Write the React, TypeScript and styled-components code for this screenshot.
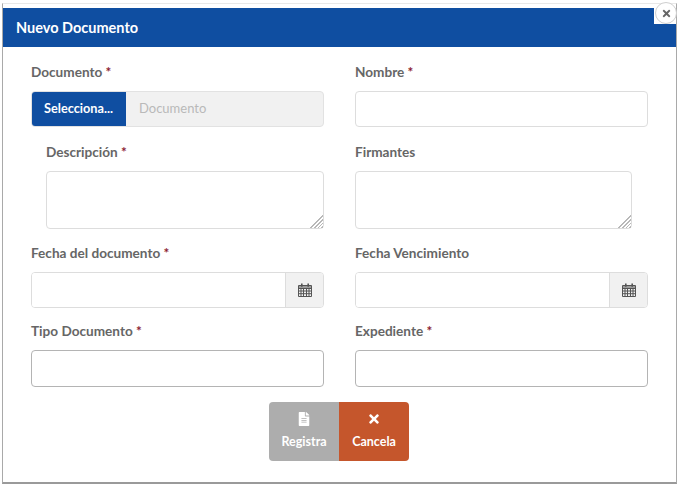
import React from 'react';
import styled, { createGlobalStyle } from 'styled-components';
import { FaFileAlt, FaTimes } from 'react-icons/fa';

const GlobalStyle = createGlobalStyle`
  html, body {
    margin: 0;
    padding: 0;
    background: #fff;
    font-family: Lato, "Open Sans", "Liberation Sans", sans-serif;
  }
`;

const Modal = styled.div`
  position: relative;
  box-sizing: border-box;
  width: 675px;
  height: 481px;
  margin: 3px 0 0 2px;
  padding-top: 4px;
  border: 1px solid #a9a9a9;
  border-top-color: #e8e8e8;
  border-bottom: 2px solid #9a9a9a;
`;

const Header = styled.header`
  display: flex;
  align-items: center;
  box-sizing: border-box;
  height: 39px;
  padding: 0 0 1px 13px;
  background: #0f4ea1;
  color: #fff;
  font-size: 14.5px;
  font-weight: 700;
`;

const CloseCorner = styled.div`
  position: absolute;
  top: 4px;
  right: 0;
  display: flex;
  align-items: flex-end;
  justify-content: flex-end;
  width: 22px;
  height: 16px;
  background: #fff;
`;

const CloseButton = styled.button`
  display: flex;
  flex-shrink: 0;
  align-items: center;
  justify-content: center;
  box-sizing: border-box;
  width: 22px;
  height: 22px;
  margin-right: -1px;
  padding: 0;
  border: 1px solid #cfcfcf;
  border-radius: 50%;
  background: #fff;
  color: #666;
  font-size: 11px;
`;

const Form = styled.form`
  display: grid;
  grid-template-columns: 293px 293px;
  column-gap: 31px;
  padding: 17px 0 0 28px;
`;

const Field = styled.div<{ $indentLeft?: boolean; $indentRight?: boolean; $height: number }>`
  display: flex;
  flex-direction: column;
  height: ${(p) => p.$height}px;
  padding-left: ${(p) => (p.$indentLeft ? 15 : 0)}px;
  padding-right: ${(p) => (p.$indentRight ? 16 : 0)}px;
`;

const Label = styled.label`
  display: block;
  height: 27px;
  color: #666666;
  font-size: 13.6px;
  font-weight: 700;
  line-height: 17px;
`;

const Required = styled.span`
  color: #8c1c33;
`;

const TextInput = styled.input<{ $dark?: boolean; $tall?: boolean }>`
  display: block;
  box-sizing: border-box;
  width: 100%;
  height: ${(p) => (p.$tall ? 37 : 36)}px;
  padding: 0 10px;
  border: 1px solid ${(p) => (p.$dark ? '#b4b4b4' : '#dddddd')};
  border-radius: 4px;
  background: #fff;
`;

const TextArea = styled.textarea`
  display: block;
  box-sizing: border-box;
  width: 100%;
  height: 58px;
  padding: 6px 10px;
  border: 1px solid #dddddd;
  border-radius: 4px;
  background: #fff;
  resize: vertical;
  &::-webkit-resizer {
    background:
      linear-gradient(135deg, #fff 52%, transparent 52%),
      repeating-linear-gradient(135deg, #fff 0 1.5px, #b8b8b8 1.5px 2.6px);
  }
`;

const FileGroup = styled.div`
  display: flex;
  height: 36px;
  border: 1px solid #e2e2e2;
  border-radius: 4px;
  box-sizing: border-box;
  background: #f1f1f1;
  overflow: hidden;
`;

const FileButton = styled.div`
  display: flex;
  align-items: center;
  justify-content: center;
  width: 95px;
  margin: -1px 0 -1px -1px;
  padding-bottom: 3px;
  background: #0f4ea1;
  color: #fff;
  font-size: 12.7px;
  font-weight: 700;
`;

const FilePlaceholder = styled.div`
  display: flex;
  align-items: center;
  padding: 0 0 3px 13px;
  color: #b9b9b9;
  font-size: 13px;
  font-weight: 400;
`;

const DateGroup = styled.div`
  display: flex;
  box-sizing: border-box;
  height: 36px;
  border: 1px solid #dddddd;
  border-radius: 4px;
  overflow: hidden;
`;

const DateInput = styled.input`
  flex: 1;
  min-width: 0;
  border: 0;
  background: #fff;
`;

const DateAddon = styled.span`
  display: flex;
  align-items: center;
  justify-content: center;
  width: 37px;
  border-left: 1px solid #dddddd;
  background: #f1f1f1;
  color: #555;
`;

const Actions = styled.div`
  display: flex;
  justify-content: center;
  margin: 15px 0 0 -1px;
`;

const ActionButton = styled.button<{ $bg: string; $side: 'left' | 'right' }>`
  display: flex;
  flex-direction: column;
  align-items: center;
  gap: 8px;
  box-sizing: border-box;
  width: 70px;
  height: 59px;
  padding: 10px 0 0;
  border: 0;
  border-radius: ${(p) => (p.$side === 'left' ? '4px 0 0 4px' : '0 4px 4px 0')};
  background: ${(p) => p.$bg};
  color: #fff;
  font-family: inherit;
  font-size: 12.5px;
  font-weight: 700;
  line-height: 15px;
  svg {
    font-size: 14px;
  }
`;

const CalendarIcon: React.FC = () => (
  <svg width="14" height="14" viewBox="0 0 14 14" aria-hidden="true">
    <path
      d="M.5 2.5h13v11H.5z M.5 5.5h13 M.5 8h13 M.5 10.7h13 M3 5.5v8 M5.5 5.5v8 M8.5 5.5v8 M11 5.5v8"
      fill="none"
      stroke="currentColor"
      strokeWidth="1"
    />
    <path d="M3 .5h1.6v3.2H3zM9.4.5H11v3.2H9.4z" fill="currentColor" />
    <path d="M1 2.5h12v3H1z" fill="currentColor" opacity="0.55" />
  </svg>
);

const Req: React.FC = () => <Required>*</Required>;

const App: React.FC = () => {
  return (
    <>
      <GlobalStyle />
      <Modal>
        <Header>Nuevo Documento</Header>
        <CloseCorner>
          <CloseButton type="button" aria-label="Cerrar">
            <FaTimes />
          </CloseButton>
        </CloseCorner>
        <Form>
          <Field $height={80}>
            <Label>Documento <Req /></Label>
            <FileGroup>
              <FileButton>Selecciona...</FileButton>
              <FilePlaceholder>Documento</FilePlaceholder>
            </FileGroup>
          </Field>
          <Field $height={80}>
            <Label>Nombre <Req /></Label>
            <TextInput />
          </Field>

          <Field $indentLeft $height={101}>
            <Label>Descripción <Req /></Label>
            <TextArea />
          </Field>
          <Field $indentRight $height={101}>
            <Label>Firmantes</Label>
            <TextArea />
          </Field>

          <Field $height={78}>
            <Label>Fecha del documento <Req /></Label>
            <DateGroup>
              <DateInput />
              <DateAddon><CalendarIcon /></DateAddon>
            </DateGroup>
          </Field>
          <Field $height={78}>
            <Label>Fecha Vencimiento</Label>
            <DateGroup>
              <DateInput />
              <DateAddon><CalendarIcon /></DateAddon>
            </DateGroup>
          </Field>

          <Field $height={64}>
            <Label>Tipo Documento <Req /></Label>
            <TextInput $dark $tall />
          </Field>
          <Field $height={64}>
            <Label>Expediente <Req /></Label>
            <TextInput $dark $tall />
          </Field>
        </Form>
        <Actions>
          <ActionButton type="button" $bg="#adadad" $side="left">
            <FaFileAlt />
            Registra
          </ActionButton>
          <ActionButton type="button" $bg="#c5562c" $side="right">
            <FaTimes />
            Cancela
          </ActionButton>
        </Actions>
      </Modal>
    </>
  );
};

export default App;
